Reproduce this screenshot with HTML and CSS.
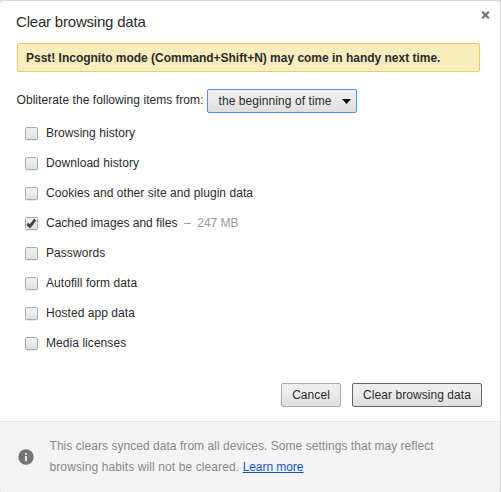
FILE: index.html
```html
<!DOCTYPE html>
<html lang="en">
<head>
<meta charset="utf-8">
<title>Clear browsing data</title>
<link rel="stylesheet" href="styles.css">
</head>
<body>
<main class="dialog">
  <header class="header">
    <h1>Clear browsing data</h1>
    <button class="close" aria-label="Close"><svg width="9" height="8" viewBox="0 0 9 8"><path d="M1.2 .7 7.8 7.3M7.8 .7 1.2 7.3" stroke="#777" stroke-width="2.2"/></svg></button>
  </header>
  <div class="banner">Psst! Incognito mode (Command+Shift+N) may come in handy next time.</div>
  <div class="period">
    <span class="period-label">Obliterate the following items from:</span>
    <button class="select"><span>the beginning of time</span><svg width="9" height="5" viewBox="0 0 9 5"><path d="M0 0h9L4.5 5z" fill="#000"/></svg></button>
  </div>
  <ul class="items">
    <li><i class="box"></i><span>Browsing history</span></li>
    <li><i class="box"></i><span>Download history</span></li>
    <li><i class="box"></i><span>Cookies and other site and plugin data</span></li>
    <li class="checked"><i class="box"><svg width="11" height="11" viewBox="0 0 11 11"><path d="M1.3 5.8 4 8.4 9.2 1.6" fill="none" stroke="#444" stroke-width="2.9"/></svg></i><span>Cached images and files</span><span class="size">– &nbsp;247 MB</span></li>
    <li><i class="box"></i><span>Passwords</span></li>
    <li><i class="box"></i><span>Autofill form data</span></li>
    <li><i class="box"></i><span>Hosted app data</span></li>
    <li><i class="box"></i><span>Media licenses</span></li>
  </ul>
  <div class="actions">
    <button class="btn cancel">Cancel</button>
    <button class="btn primary">Clear browsing data</button>
  </div>
  <footer class="footer">
    <svg class="info" width="16" height="16" viewBox="0 0 16 16"><circle cx="8" cy="8" r="7.7" fill="#757575"/><path d="M7.1 4h1.8v1.7H7.1zM7.1 7h1.8v5H7.1z" fill="#f4f4f4"/></svg>
    <p>This clears synced data from all devices. Some settings that may reflect<br><span class="line2">browsing habits will not be cleared. </span><a href="#">Learn more</a></p>
  </footer>
</main>
</body>
</html>
```
FILE: styles.css
```css
* { box-sizing: border-box; }
body {
  margin: 0;
  height: 492px;
  padding: 1px 1px 0 0;
  background: #d8d8d8;
  font: 12px/18px "Liberation Sans", Arial, sans-serif;
  color: #2b2b2b;
  letter-spacing: .06px;
  overflow: hidden;
}
button { font: inherit; color: inherit; letter-spacing: inherit; margin: 0; }
.dialog {
  display: flex;
  flex-direction: column;
  height: 491px;
  background: #fff;
  border-radius: 3px;
  overflow: hidden;
}
.header {
  display: flex;
  justify-content: space-between;
  height: 42px;
  padding: 10px 10px 0 16px;
}
h1 { margin: 0; font-size: 15px; line-height: 22px; font-weight: 400; letter-spacing: -.2px; }
.close { display: flex; align-self: flex-start; padding: 0; border: 0; background: none; }
.banner {
  height: 29px;
  margin: 0 20px 0 17px;
  padding: 0 8px;
  border: 1px solid #edc967;
  border-radius: 2px;
  background: #f9edbe;
  font-weight: 700;
  line-height: 28px;
  letter-spacing: -.015px;
  white-space: nowrap;
}
.period { display: flex; height: 46px; padding: 17px 0 0 16.5px; }
.period-label { width: 190.5px; line-height: 22px; white-space: nowrap; }
.select {
  display: flex;
  align-items: center;
  justify-content: space-between;
  width: 150px;
  height: 24px;
  padding: 0 5px 0 10.5px;
  border: 1px solid #4d90fe;
  border-radius: 2px;
  background: linear-gradient(#ededed 38%, #dedede);
  letter-spacing: .08px;
  white-space: nowrap;
}
.items { margin: 0; padding: 0 0 0 25px; list-style: none; }
.items li { display: flex; height: 30px; line-height: 30px; white-space: nowrap; }
.items .checked { letter-spacing: 0; }
.box {
  flex: none;
  width: 13px;
  height: 13px;
  margin: 9px 8px 0 0;
  border: 1px solid #aaa;
  border-radius: 1.5px;
  background: linear-gradient(#eee 38%, #dedede);
  box-shadow: 0 1px 0 rgba(0, 0, 0, .08);
}
.box svg { display: block; }
.size { margin-left: 6.5px; color: #999; }
.actions { display: flex; justify-content: flex-end; gap: 11px; padding: 25px 18px 0 0; }
.btn {
  height: 24px;
  padding: 0;
  border: 1px solid #aaa;
  border-radius: 2px;
  background: linear-gradient(#ededed 38%, #dedede);
  white-space: nowrap;
}
.cancel { width: 60px; }
.primary { width: 130px; border-color: #666; }
.footer {
  display: flex;
  height: 71px;
  margin-top: auto;
  padding: 14px 0 0 18px;
  border-top: 1px solid #e6e6e6;
  background: #f4f4f4;
  color: #888;
}
.info { flex: none; margin: 13px 15.5px 0 0; }
.footer p { margin: 0; line-height: 21px; letter-spacing: .045px; white-space: nowrap; }
.footer .line2 { letter-spacing: .1px; }
.footer a { color: #15c; letter-spacing: -.06px; }
```
